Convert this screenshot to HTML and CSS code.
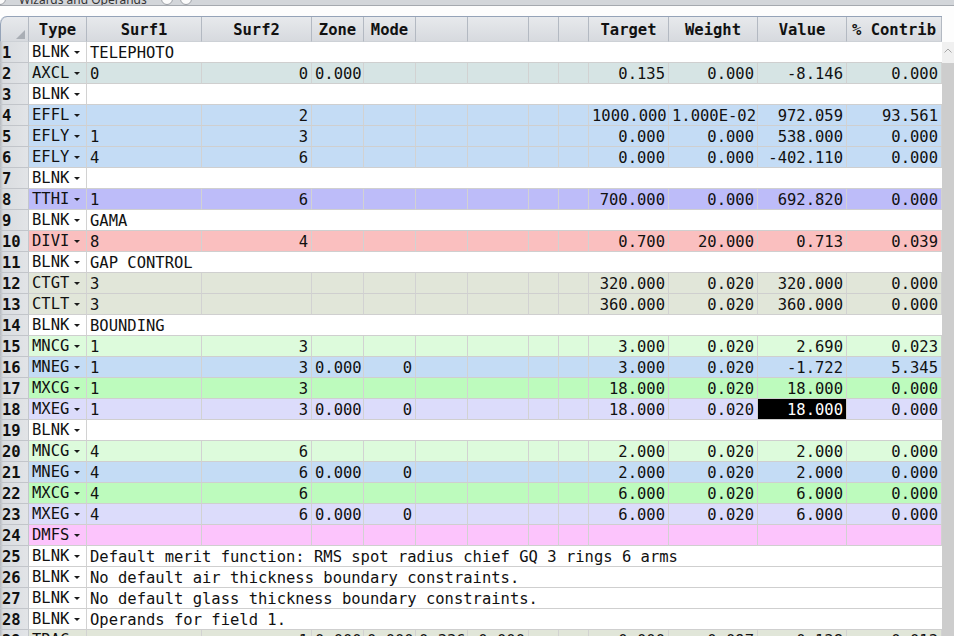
FILE: index.html
```html
<!DOCTYPE html>
<html>
<head>
<meta charset="utf-8">
<link rel="stylesheet" href="styles.css">
</head>
<body>
<div class="titlebar">
  <span class="circ first"></span>
  <span class="ttext">Wizards and Operands</span>
  <span class="circ c1"></span>
  <span class="circ c2"></span>
</div>
<div class="titleline"></div>
<div class="gap"></div>
<div class="editor">
  <div class="table">
    <div class="head">
      <div class="corner"><span class="tri"></span></div>
      <div>Type</div><div>Surf1</div><div>Surf2</div><div>Zone</div><div>Mode</div>
      <div></div><div></div><div></div><div></div>
      <div>Target</div><div>Weight</div><div>Value</div><div>% Contrib</div>
    </div>

    <div class="row"><div class="num">1</div><div class="type">BLNK<i class="dd"></i></div><div class="comment">TELEPHOTO</div></div>

    <div class="row axcl"><div class="num">2</div><div class="type">AXCL<i class="dd"></i></div><div class="l">0</div><div>0</div><div>0.000</div><div></div><div></div><div></div><div></div><div></div><div>0.135</div><div>0.000</div><div>-8.146</div><div>0.000</div></div>

    <div class="row"><div class="num">3</div><div class="type">BLNK<i class="dd"></i></div><div class="comment"></div></div>

    <div class="row blue"><div class="num">4</div><div class="type">EFFL<i class="dd"></i></div><div class="l"></div><div>2</div><div></div><div></div><div></div><div></div><div></div><div></div><div>1000.000</div><div>1.000E-02</div><div>972.059</div><div>93.561</div></div>

    <div class="row blue"><div class="num">5</div><div class="type">EFLY<i class="dd"></i></div><div class="l">1</div><div>3</div><div></div><div></div><div></div><div></div><div></div><div></div><div>0.000</div><div>0.000</div><div>538.000</div><div>0.000</div></div>

    <div class="row blue"><div class="num">6</div><div class="type">EFLY<i class="dd"></i></div><div class="l">4</div><div>6</div><div></div><div></div><div></div><div></div><div></div><div></div><div>0.000</div><div>0.000</div><div>-402.110</div><div>0.000</div></div>

    <div class="row"><div class="num">7</div><div class="type">BLNK<i class="dd"></i></div><div class="comment"></div></div>

    <div class="row tthi"><div class="num">8</div><div class="type">TTHI<i class="dd"></i></div><div class="l">1</div><div>6</div><div></div><div></div><div></div><div></div><div></div><div></div><div>700.000</div><div>0.000</div><div>692.820</div><div>0.000</div></div>

    <div class="row"><div class="num">9</div><div class="type">BLNK<i class="dd"></i></div><div class="comment">GAMA</div></div>

    <div class="row divi"><div class="num">10</div><div class="type">DIVI<i class="dd"></i></div><div class="l">8</div><div>4</div><div></div><div></div><div></div><div></div><div></div><div></div><div>0.700</div><div>20.000</div><div>0.713</div><div>0.039</div></div>

    <div class="row"><div class="num">11</div><div class="type">BLNK<i class="dd"></i></div><div class="comment">GAP CONTROL</div></div>

    <div class="row ctg"><div class="num">12</div><div class="type">CTGT<i class="dd"></i></div><div class="l">3</div><div></div><div></div><div></div><div></div><div></div><div></div><div></div><div>320.000</div><div>0.020</div><div>320.000</div><div>0.000</div></div>

    <div class="row ctg"><div class="num">13</div><div class="type">CTLT<i class="dd"></i></div><div class="l">3</div><div></div><div></div><div></div><div></div><div></div><div></div><div></div><div>360.000</div><div>0.020</div><div>360.000</div><div>0.000</div></div>

    <div class="row"><div class="num">14</div><div class="type">BLNK<i class="dd"></i></div><div class="comment">BOUNDING</div></div>

    <div class="row mncg"><div class="num">15</div><div class="type">MNCG<i class="dd"></i></div><div class="l">1</div><div>3</div><div></div><div></div><div></div><div></div><div></div><div></div><div>3.000</div><div>0.020</div><div>2.690</div><div>0.023</div></div>

    <div class="row blue"><div class="num">16</div><div class="type">MNEG<i class="dd"></i></div><div class="l">1</div><div>3</div><div>0.000</div><div>0</div><div></div><div></div><div></div><div></div><div>3.000</div><div>0.020</div><div>-1.722</div><div>5.345</div></div>

    <div class="row mxcg"><div class="num">17</div><div class="type">MXCG<i class="dd"></i></div><div class="l">1</div><div>3</div><div></div><div></div><div></div><div></div><div></div><div></div><div>18.000</div><div>0.020</div><div>18.000</div><div>0.000</div></div>

    <div class="row mxeg"><div class="num">18</div><div class="type">MXEG<i class="dd"></i></div><div class="l">1</div><div>3</div><div>0.000</div><div>0</div><div></div><div></div><div></div><div></div><div>18.000</div><div>0.020</div><div class="sel">18.000</div><div>0.000</div></div>

    <div class="row"><div class="num">19</div><div class="type">BLNK<i class="dd"></i></div><div class="comment"></div></div>

    <div class="row mncg"><div class="num">20</div><div class="type">MNCG<i class="dd"></i></div><div class="l">4</div><div>6</div><div></div><div></div><div></div><div></div><div></div><div></div><div>2.000</div><div>0.020</div><div>2.000</div><div>0.000</div></div>

    <div class="row blue"><div class="num">21</div><div class="type">MNEG<i class="dd"></i></div><div class="l">4</div><div>6</div><div>0.000</div><div>0</div><div></div><div></div><div></div><div></div><div>2.000</div><div>0.020</div><div>2.000</div><div>0.000</div></div>

    <div class="row mxcg"><div class="num">22</div><div class="type">MXCG<i class="dd"></i></div><div class="l">4</div><div>6</div><div></div><div></div><div></div><div></div><div></div><div></div><div>6.000</div><div>0.020</div><div>6.000</div><div>0.000</div></div>

    <div class="row mxeg"><div class="num">23</div><div class="type">MXEG<i class="dd"></i></div><div class="l">4</div><div>6</div><div>0.000</div><div>0</div><div></div><div></div><div></div><div></div><div>6.000</div><div>0.020</div><div>6.000</div><div>0.000</div></div>

    <div class="row dmfs"><div class="num">24</div><div class="type">DMFS<i class="dd"></i></div><div class="l"></div><div></div><div></div><div></div><div></div><div></div><div></div><div></div><div></div><div></div><div></div><div></div></div>

    <div class="row"><div class="num">25</div><div class="type">BLNK<i class="dd"></i></div><div class="comment">Default merit function: RMS spot radius chief GQ 3 rings 6 arms</div></div>

    <div class="row"><div class="num">26</div><div class="type">BLNK<i class="dd"></i></div><div class="comment">No default air thickness boundary constraints.</div></div>

    <div class="row"><div class="num">27</div><div class="type">BLNK<i class="dd"></i></div><div class="comment">No default glass thickness boundary constraints.</div></div>

    <div class="row"><div class="num">28</div><div class="type">BLNK<i class="dd"></i></div><div class="comment">Operands for field 1.</div></div>

    <div class="row ctg"><div class="num">29</div><div class="type">TRAC<i class="dd"></i></div><div class="l"></div><div>1</div><div>0.000</div><div>0.000</div><div>0.336</div><div>0.000</div><div></div><div></div><div>0.000</div><div>0.097</div><div>0.138</div><div>0.013</div></div>
  </div>
  <div class="scroll">
    <div class="s-head"></div>
    <div class="s-arrow"><svg width="8" height="5" viewBox="0 0 8 5"><path d="M0.5 4.5 L4 1 L7.5 4.5" fill="none" stroke="#a6a6a6" stroke-width="1"/></svg></div>
    <div class="s-thumb"></div>
  </div>
</div>
</body>
</html>
```
FILE: styles.css
```css
html, body {
  margin: 0;
  padding: 0;
  background: #ffffff;
  overflow: hidden;
}
body {
  width: 954px;
  height: 636px;
  font-family: "DejaVu Sans Mono", "Liberation Mono", monospace;
  font-size: 15.5px;
  color: #111111;
}
.titlebar {
  height: 5px;
  background: #d3d6da;
  display: flex;
  align-items: flex-end;
  overflow: hidden;
}
.circ {
  flex: none;
  width: 10px;
  height: 10px;
  border: 1px solid #9da1a7;
  border-radius: 50%;
  background: #fbfbfb;
}
.circ.first { margin-left: -6px; }
.ttext {
  font-family: "Noto Sans", "DejaVu Sans", sans-serif;
  font-size: 12px;
  line-height: 11px;
  color: #333;
  margin-left: 13px;
  white-space: nowrap;
}
.circ.c1 { margin-left: 14px; }
.circ.c2 { margin-left: 7px; }
.titleline {
  height: 1px;
  background: #a5a9af;
}
.gap { height: 10px; background: #fdfdfd; }

.editor {
  display: flex;
  align-items: flex-start;
}
.table {
  width: 942px;
  flex: none;
}
.head, .row {
  display: grid;
  grid-template-columns: 29px 58px 115px 110px 52px 52px 52px 61px 30px 30px 80px 89px 89px 95px;
}
.head {
  border-top: 1px solid #95a3b8;
  border-top-left-radius: 7px;
  background: linear-gradient(#e7e9ec, #d6d9de);
  overflow: hidden;
}
.head > div {
  height: 25px;
  box-sizing: border-box;
  border-right: 1px solid #b3b9c2;
  border-bottom: 1px solid #cdd1d6;
  text-align: center;
  font-weight: bold;
  line-height: 26px;
  white-space: nowrap;
}
.head > .corner {
  position: relative;
  border-left: 1px solid #95a3b8;
  border-top-left-radius: 7px;
}
.tri {
  position: absolute;
  right: 3px;
  bottom: 2px;
  width: 0;
  height: 0;
  border-style: solid;
  border-width: 0 0 9px 9px;
  border-color: transparent transparent #a9aeb5 transparent;
}
.row > div {
  height: 21px;
  box-sizing: border-box;
  border-right: 1px solid #d2d2d2;
  border-bottom: 1px solid #cfcfcf;
  padding: 0 3px;
  text-align: right;
  line-height: 23px;
  white-space: nowrap;
  overflow: hidden;
}
.row > .num {
  background: linear-gradient(to right, #b4b8be 0px, #d9dce0 3px, #e2e4e7 100%);
  text-align: left;
  padding-left: 2px;
  font-weight: bold;
  border-right: 1px solid #c3c7cc;
  border-bottom: 1px solid #c2c5ca;
}
.row > .type {
  display: flex;
  align-items: center;
  text-align: left;
  padding-left: 3px;
}
.dd {
  display: block;
  width: 0;
  height: 0;
  border-left: 3px solid transparent;
  border-right: 3px solid transparent;
  border-top: 3px solid #1a1a1a;
  margin-left: 5px;
  margin-top: 1px;
}
.row > .l { text-align: left; }
.row > .comment {
  grid-column: 3 / -1;
  text-align: left;
  border-right: none;
}
.row > .sel {
  background: #000000;
  color: #ffffff;
}

.axcl { background: #d6e4e4; }
.blue { background: #c4dcf5; }
.tthi { background: #bdbcf9; }
.divi { background: #fabfbf; }
.ctg  { background: #e1e6d9; }
.mncg { background: #ddfbdc; }
.mxcg { background: #bdfbbd; }
.mxeg { background: #dcdcfb; }
.dmfs { background: #fcc4fc; }

.scroll {
  width: 12px;
  flex: none;
  display: flex;
  flex-direction: column;
}
.s-head { height: 26px; background: #fdfdfd; }
.s-arrow {
  height: 21px;
  background: #f0f0f0;
  display: flex;
  justify-content: center;
  align-items: flex-start;
  padding-top: 6px;
  box-sizing: border-box;
}
.s-thumb {
  height: 600px;
  background: #cdcdcd;
}
```
